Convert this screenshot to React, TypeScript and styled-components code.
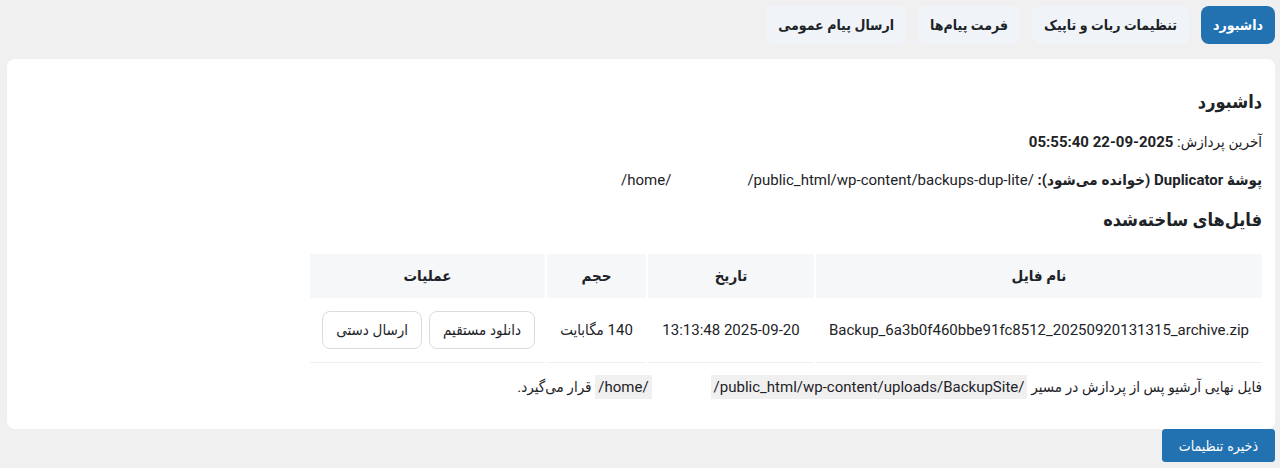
import React from "react";
import styled, { createGlobalStyle } from "styled-components";

const Global = createGlobalStyle`
  html, body { margin: 0; padding: 0; background: #f0f0f1; }
  body {
    direction: rtl;
    font-family: Roboto, "DejaVu Sans Condensed", "DejaVu Sans", sans-serif;
    font-size: 15px;
    color: #1d2327;
  }
  * { box-sizing: border-box; }
`;

const Wrap = styled.div`
  padding: 6px 5px 6px 7px;
  display: flex;
  flex-direction: column;
`;

const Tabs = styled.nav`
  display: flex;
  gap: 12px;
  margin-bottom: 15px;
`;

const Tab = styled.button<{ $active?: boolean }>`
  height: 38px;
  padding: 0 12px;
  border: none;
  border-radius: 8px;
  font-family: inherit;
  font-size: 14px;
  font-weight: 700;
  background: ${(p) => (p.$active ? "#2271b1" : "#f0f3f8")};
  color: ${(p) => (p.$active ? "#fff" : "#1d2327")};
`;

const Card = styled.section`
  background: #fff;
  border-radius: 8px;
  padding: 20px 13px 21px 13px;
  display: flex;
  flex-direction: column;
`;

const Title = styled.h2`
  margin: 11px 0 18px;
  font-size: 18px;
  line-height: 24px;
  font-weight: 700;
`;

const SubTitle = styled(Title).attrs({ as: "h3" })`
  margin: 0 0 22px;
`;

const Line = styled.p`
  margin: 0 0 18px;
  line-height: 20px;
`;

const Strong = styled.strong`
  font-weight: 700;
`;

const Path = styled.span`
  direction: ltr;
  unicode-bidi: isolate;
  display: inline-flex;
`;

const Gap = styled.span<{ $w: number }>`
  display: inline-block;
  width: ${(p) => p.$w}px;
  background: #fff;
`;

const Code = styled.span`
  background: #f0f0f1;
  padding: 2px 3px;
`;

const Table = styled.table`
  width: 956px;
  border-collapse: separate;
  border-spacing: 2px 0;
  margin: 0 -2px 12px 0;
  align-self: flex-start;
`;

const Th = styled.th<{ $w: number }>`
  width: ${(p) => p.$w}px;
  height: 44px;
  background: #f6f7f9;
  font-weight: 700;
  font-size: 15px;
  text-align: center;
  padding: 0 8px;
`;

const Td = styled.td`
  height: 65px;
  text-align: center;
  border-bottom: 1px solid #eef0f2;
  padding: 0 10px;
  white-space: nowrap;
`;

const Actions = styled.div`
  display: flex;
  gap: 7px;
  justify-content: flex-start;
`;

const Btn = styled.button`
  height: 38px;
  padding: 0 13px;
  background: #fff;
  border: 1px solid #dcdcde;
  border-radius: 8px;
  font-family: inherit;
  font-size: 15px;
  color: #1d2327;
`;

const Note = styled.p`
  margin: 0 0 9px;
  line-height: 20px;
`;

const Footer = styled.div`
  display: flex;
`;

const Save = styled.button`
  height: 33px;
  padding: 0 16px;
  background: #2271b1;
  border: 1px solid #2271b1;
  border-radius: 3px;
  color: #fff;
  font-family: "DejaVu Sans Condensed", "DejaVu Sans", sans-serif;
  font-size: 14px;
`;

export default function App() {
  return (
    <>
      <Global />
      <Wrap>
        <Tabs>
          <Tab $active>داشبورد</Tab>
          <Tab>تنظیمات ربات و تاپیک</Tab>
          <Tab>فرمت پیام‌ها</Tab>
          <Tab>ارسال پیام عمومی</Tab>
        </Tabs>
        <Card>
          <Title>داشبورد</Title>
          <Line>
            آخرین پردازش: <Strong>2025-09-22 05:55:40</Strong>
          </Line>
          <Line>
            <Strong>پوشهٔ Duplicator (خوانده می‌شود):</Strong>{" "}
            <Path>
              /home/
              <Gap $w={76} />
              /public_html/wp-content/backups-dup-lite/
            </Path>
          </Line>
          <SubTitle>فایل‌های ساخته‌شده</SubTitle>
          <Table>
            <thead>
              <tr>
                <Th $w={446}>نام فایل</Th>
                <Th $w={166}>تاریخ</Th>
                <Th $w={99}>حجم</Th>
                <Th $w={235}>عملیات</Th>
              </tr>
            </thead>
            <tbody>
              <tr>
                <Td>Backup_6a3b0f460bbe91fc8512_20250920131315_archive.zip</Td>
                <Td>2025-09-20 13:13:48</Td>
                <Td>140 مگابایت</Td>
                <Td>
                  <Actions>
                    <Btn>دانلود مستقیم</Btn>
                    <Btn>ارسال دستی</Btn>
                  </Actions>
                </Td>
              </tr>
            </tbody>
          </Table>
          <Note>
            فایل نهایی آرشیو پس از پردازش در مسیر{" "}
            <Path>
              <Code>/home/</Code>
              <Gap $w={59} />
              <Code>/public_html/wp-content/uploads/BackupSite/</Code>
            </Path>{" "}
            قرار می‌گیرد.
          </Note>
        </Card>
        <Footer>
          <Save>ذخیره تنظیمات</Save>
        </Footer>
      </Wrap>
    </>
  );
}
